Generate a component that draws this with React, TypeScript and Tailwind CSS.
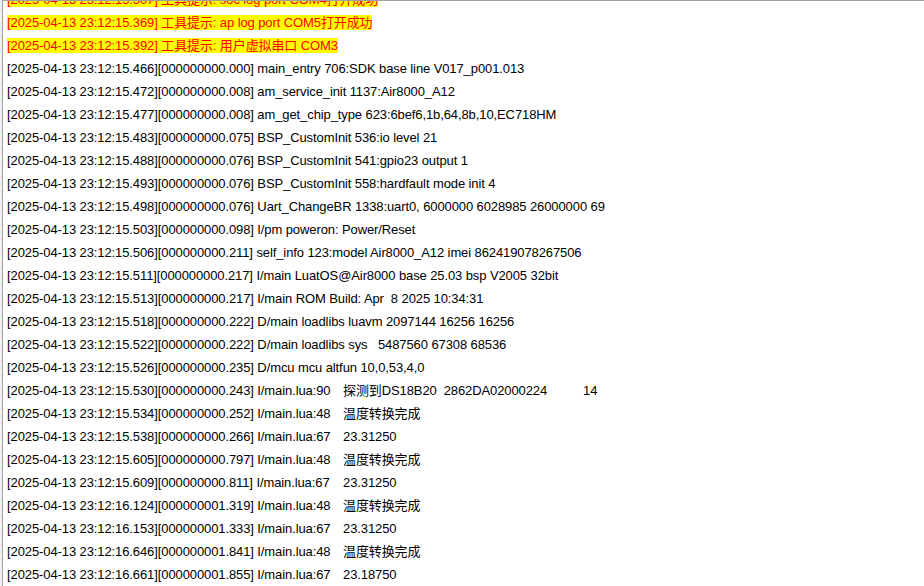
const notices: string[] = [
  "[2025-04-13 23:12:15.307] 工具提示: soc log port COM4打开成功",
  "[2025-04-13 23:12:15.369] 工具提示: ap log port COM5打开成功",
  "[2025-04-13 23:12:15.392] 工具提示: 用户虚拟串口 COM3",
];

const lines: string[] = [
  "[2025-04-13 23:12:15.466][000000000.000] main_entry 706:SDK base line V017_p001.013",
  "[2025-04-13 23:12:15.472][000000000.008] am_service_init 1137:Air8000_A12",
  "[2025-04-13 23:12:15.477][000000000.008] am_get_chip_type 623:6bef6,1b,64,8b,10,EC718HM",
  "[2025-04-13 23:12:15.483][000000000.075] BSP_CustomInit 536:io level 21",
  "[2025-04-13 23:12:15.488][000000000.076] BSP_CustomInit 541:gpio23 output 1",
  "[2025-04-13 23:12:15.493][000000000.076] BSP_CustomInit 558:hardfault mode init 4",
  "[2025-04-13 23:12:15.498][000000000.076] Uart_ChangeBR 1338:uart0, 6000000 6028985 26000000 69",
  "[2025-04-13 23:12:15.503][000000000.098] I/pm poweron: Power/Reset",
  "[2025-04-13 23:12:15.506][000000000.211] self_info 123:model Air8000_A12 imei 862419078267506",
  "[2025-04-13 23:12:15.511][000000000.217] I/main LuatOS@Air8000 base 25.03 bsp V2005 32bit",
  "[2025-04-13 23:12:15.513][000000000.217] I/main ROM Build: Apr  8 2025 10:34:31",
  "[2025-04-13 23:12:15.518][000000000.222] D/main loadlibs luavm 2097144 16256 16256",
  "[2025-04-13 23:12:15.522][000000000.222] D/main loadlibs sys   5487560 67308 68536",
  "[2025-04-13 23:12:15.526][000000000.235] D/mcu mcu altfun 10,0,53,4,0",
  "[2025-04-13 23:12:15.530][000000000.243] I/main.lua:90\t探测到DS18B20  2862DA02000224\t14",
  "[2025-04-13 23:12:15.534][000000000.252] I/main.lua:48\t温度转换完成",
  "[2025-04-13 23:12:15.538][000000000.266] I/main.lua:67\t23.31250",
  "[2025-04-13 23:12:15.605][000000000.797] I/main.lua:48\t温度转换完成",
  "[2025-04-13 23:12:15.609][000000000.811] I/main.lua:67\t23.31250",
  "[2025-04-13 23:12:16.124][000000001.319] I/main.lua:48\t温度转换完成",
  "[2025-04-13 23:12:16.153][000000001.333] I/main.lua:67\t23.31250",
  "[2025-04-13 23:12:16.646][000000001.841] I/main.lua:48\t温度转换完成",
  "[2025-04-13 23:12:16.661][000000001.855] I/main.lua:67\t23.18750",
];

export default function App() {
  return (
    <div className="flex h-[586px] w-[924px] overflow-hidden bg-white">
      <div className="w-[2px] shrink-0 bg-[#f0f0f0]" />
      <div className="flex-1 overflow-hidden border-l border-t border-[#a0a0a0]">
        <div className="mt-[-13px] pl-[4px] font-['Liberation_Sans','Noto_Sans_CJK_SC',sans-serif] text-[13px] leading-[23px] tracking-[-0.1px] whitespace-pre [tab-size:48px]">
          {notices.map((t) => (
            <div key={t}>
              <span className="bg-[#ffff00] text-[#ff0000]">{t}</span>
            </div>
          ))}
          {lines.map((t) => (
            <div key={t} className="text-black">
              {t}
            </div>
          ))}
        </div>
      </div>
    </div>
  );
}
